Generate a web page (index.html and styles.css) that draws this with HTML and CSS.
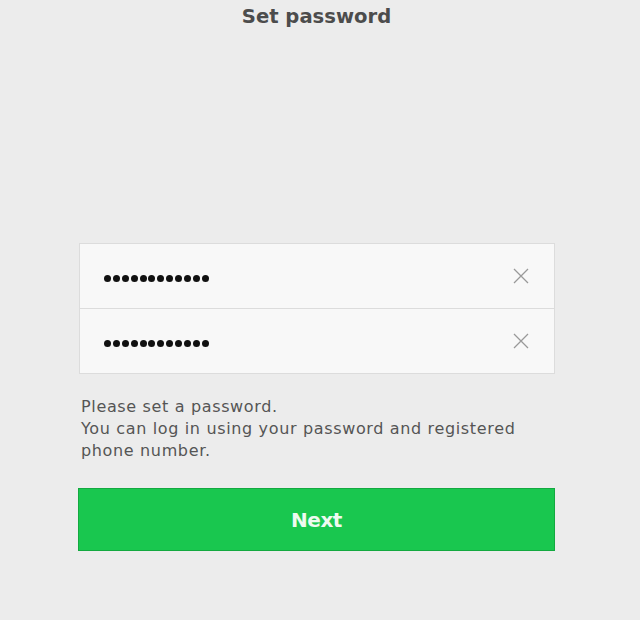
FILE: index.html
```html
<!DOCTYPE html>
<html>

<head>
    <title>Set password</title>
    <link rel="stylesheet" href="styles.css">
</head>

<body>
    <div class="page">
        <h1 class="title">Set password</h1>

        <div class="fields">
            <div class="field">
                <div class="dots">
                    <span></span><span></span><span></span><span></span><span></span><span></span>
                    <span></span><span></span><span></span><span></span><span></span><span></span>
                </div>
                <svg class="clear" width="16" height="16" viewBox="0 0 16 16">
                    <path d="M1 1 L15 15 M15 1 L1 15" stroke="#999" stroke-width="1.3" fill="none" />
                </svg>
            </div>
            <div class="field">
                <div class="dots">
                    <span></span><span></span><span></span><span></span><span></span><span></span>
                    <span></span><span></span><span></span><span></span><span></span><span></span>
                </div>
                <svg class="clear" width="16" height="16" viewBox="0 0 16 16">
                    <path d="M1 1 L15 15 M15 1 L1 15" stroke="#999" stroke-width="1.3" fill="none" />
                </svg>
            </div>
        </div>

        <p class="hint">Please set a password.<br>You can log in using your password and registered phone number.</p>

        <button class="next">Next</button>
    </div>
</body>

</html>
```

FILE: styles.css
```css
body {
    margin: 0;
    background: #ececec;
    font-family: "DejaVu Sans", Verdana, sans-serif;
}

.page {
    width: 477px;
    margin: 0 0 0 78px;
}

.title {
    margin: 0;
    padding-top: 5px;
    text-align: center;
    font-size: 19.6px;
    font-weight: bold;
    color: #4c4c4c;
    line-height: 24px;
}

.fields {
    margin-top: 214px;
    margin-left: 1px;
    background: #f8f8f8;
    border: 1px solid #dcdcdc;
}

.field {
    height: 64px;
    display: flex;
    align-items: center;
    justify-content: space-between;
    padding: 0 25px 0 24px;
}

.field + .field {
    border-top: 1px solid #dcdcdc;
}

.dots {
    display: flex;
    gap: 1.9px;
    padding-top: 4px;
}

.dots span {
    width: 7px;
    height: 7px;
    border-radius: 50%;
    background: #111;
}

.hint {
    margin: 22px 0 0 3px;
    width: 455px;
    font-size: 16px;
    letter-spacing: 0.65px;
    line-height: 22px;
    color: #555;
}

.next {
    display: block;
    width: 477px;
    height: 63px;
    margin-top: 26px;
    border: 1px solid #13a940;
    background: #19c74f;
    color: #eefaf0;
    font-family: "DejaVu Sans", Verdana, sans-serif;
    font-size: 20px;
    font-weight: bold;
    letter-spacing: -0.5px;
    cursor: pointer;
}
```
